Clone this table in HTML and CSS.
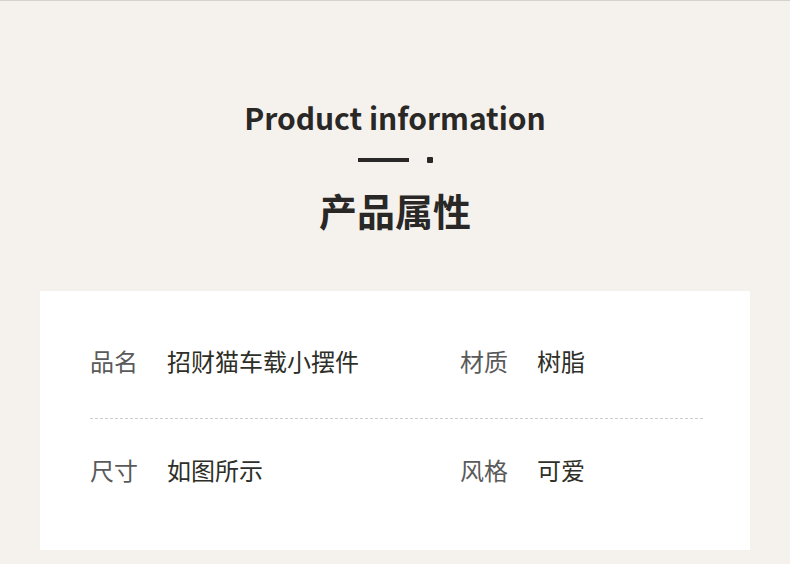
FILE: index.html
```html
<!DOCTYPE html>
<html lang="zh">
<head>
<meta charset="utf-8">
<link rel="stylesheet" href="styles.css">
</head>
<body>
<div class="page">
  <header class="head">
    <h1 class="en">Product information</h1>
    <div class="deco"><span class="bar"></span><span class="dot"></span></div>
    <h2 class="zh">产品属性</h2>
  </header>
  <section class="card">
    <div class="row first">
      <div class="cell"><span class="label">品名</span><span class="value">招财猫车载小摆件</span></div>
      <div class="cell"><span class="label">材质</span><span class="value">树脂</span></div>
    </div>
    <div class="row second">
      <div class="cell"><span class="label">尺寸</span><span class="value">如图所示</span></div>
      <div class="cell"><span class="label">风格</span><span class="value">可爱</span></div>
    </div>
  </section>
</div>
</body>
</html>
```

FILE: styles.css
```css
* { box-sizing: border-box; margin: 0; padding: 0; }
html, body { width: 790px; height: 564px; overflow: hidden; }
body {
  background: #f5f2ed;
  font-family: "Noto Sans CJK SC", "Noto Sans", sans-serif;
  border-top: 1px solid #d6d1ca;
}
.page { padding: 0 40px; }
.head { display: flex; flex-direction: column; align-items: center; padding-top: 96px; }
.en {
  font-size: 30px; font-weight: 700; color: #2a2826; line-height: 40px; letter-spacing: 0;
}
.deco { display: flex; align-items: center; gap: 18px; margin-top: 20px; height: 6px; }
.bar { width: 51px; height: 4px; background: #2a2826; }
.dot { width: 6px; height: 6px; background: #2a2826; border-radius: 1px; }
.zh {
  font-size: 38px; font-weight: 700; color: #2a2826; line-height: 50px; margin-top: 22px;
}
.card { background: #fff; margin-top: 56px; height: 259px; padding: 0 47px 0 50px; }
.row { display: grid; grid-template-columns: 370px 1fr; }
.row.first { padding-top: 55px; padding-bottom: 42px; border-bottom: 1px dashed #cccccc; }
.row.second { padding-top: 36px; }
.cell { display: flex; align-items: center; line-height: 30px; }
.label { width: 77px; font-size: 24px; color: #5a5a5a; }
.value { font-size: 24px; color: #2e2f28; }
```
